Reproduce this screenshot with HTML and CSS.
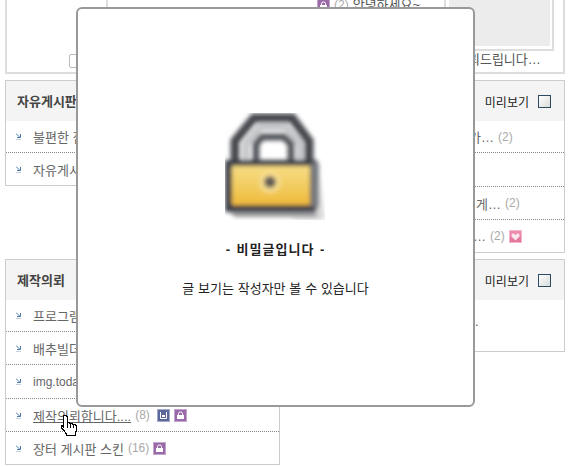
FILE: index.html
```html
<!DOCTYPE html>
<html lang="ko">
<head>
<meta charset="utf-8">
<title>비밀글</title>
<link rel="stylesheet" href="styles.css">
</head>
<body>
<svg class="defs" width="0" height="0" aria-hidden="true">
  <defs>
    <linearGradient id="gold" x1="0" y1="0" x2="0" y2="1">
      <stop offset="0" stop-color="#f7dc84"/><stop offset=".55" stop-color="#f2cb5e"/><stop offset="1" stop-color="#efb93a"/>
    </linearGradient>
    <linearGradient id="pink" x1="0" y1="0" x2="0" y2="1">
      <stop offset="0" stop-color="#ef8fb0"/><stop offset="1" stop-color="#e2709a"/>
    </linearGradient>
    <filter id="blur" x="-10%" y="-10%" width="120%" height="120%"><feGaussianBlur stdDeviation="2.2"/></filter>
    <symbol id="bullet" viewBox="0 0 5 7">
      <path d="M0 .5 3.500 4M4.500 1v3.500H1" fill="none" stroke="#4a78ab"/>
      <path d="M0 6.500h5" stroke="#c6cfdc"/>
    </symbol>
    <symbol id="lock" viewBox="0 0 13 13">
      <rect x=".5" y=".5" width="12" height="12" fill="#9a69a8" stroke="#c3a6cf"/>
      <path d="M4.500 6V4.500q0-1.500 2-1.500t2 1.500V6" fill="none" stroke="#fff"/>
      <rect x="3" y="6" width="7" height="4" fill="#fff"/>
    </symbol>
    <symbol id="save" viewBox="0 0 13 13">
      <rect x=".5" y=".5" width="12" height="12" fill="#5b6799" stroke="#a3abc8"/>
      <path d="M3.500 3v6.500h6V3" fill="none" stroke="#fff"/>
      <rect x="5" y="6" width="3" height="2" fill="#fff"/>
    </symbol>
    <symbol id="heart" viewBox="0 0 13 13">
      <rect x=".5" y=".5" width="12" height="12" fill="url(#pink)" stroke="#f3b7cb"/>
      <path d="M6.500 10.500 2.500 6.500V4.500l1-1h1.500l1.500 1.500 1.500-1.500H9.500l1 1v2z" fill="#fbe6ee"/>
    </symbol>
  </defs>
</svg>

<div class="page">
  <div class="top-row">
    <section class="top-panel top-left"><span class="divider"></span><span class="tag"></span></section>
    <section class="top-panel top-right">
      <div class="top-list"><svg class="mini"><use href="#lock"/></svg><span class="count">(2)</span><span class="top-text">안녕하세요~ .</span></div>
      <div class="top-thumb-col">
        <div class="thumb"><div class="thumb-fill"></div></div>
        <div class="caption">의뢰드립니다…</div>
      </div>
    </section>
  </div>

  <div class="board-row row-a">
    <section class="board">
      <header class="board-head"><h2>자유게시판</h2></header>
      <ul class="rows">
        <li><svg class="bullet"><use href="#bullet"/></svg><a>불편한 점</a></li>
        <li><svg class="bullet"><use href="#bullet"/></svg><a>자유게시판</a></li>
      </ul>
    </section>
    <section class="board">
      <header class="board-head right"><span>미리보기</span><i class="check"></i></header>
      <ul class="rows end">
        <li class="r1"><a>가…</a><span class="count">(2)</span></li>
        <li></li>
        <li class="r3"><a>게…</a><span class="count">(2)</span></li>
        <li class="r4"><a>…</a><span class="count">(2)</span><svg class="mini"><use href="#heart"/></svg></li>
      </ul>
    </section>
  </div>

  <div class="board-row row-b">
    <section class="board">
      <header class="board-head"><h2>제작의뢰</h2></header>
      <ul class="rows">
        <li><svg class="bullet"><use href="#bullet"/></svg><a>프로그램</a></li>
        <li><svg class="bullet"><use href="#bullet"/></svg><a>배추빌더</a></li>
        <li class="latin"><svg class="bullet"><use href="#bullet"/></svg><a>img.today</a></li>
        <li class="hover"><svg class="bullet"><use href="#bullet"/></svg><a>제작의뢰합니다....</a><span class="count">(8)</span><svg class="mini"><use href="#save"/></svg><svg class="mini"><use href="#lock"/></svg>
          <svg class="cursor" width="20" height="24" viewBox="0 0 20 24" shape-rendering="crispEdges"><path d="M6 1.500h2l1 1v6h2l1 1h2l1 1h2l1 1v6l-1 1v3H8v-2l-2-3-3-3v-2h1l1 1V2.500z" fill="#fff" stroke="#000"/><path d="M9.500 9v5M12.500 10v4M15.500 11v3" stroke="#000" fill="none"/></svg>
        </li>
        <li><svg class="bullet"><use href="#bullet"/></svg><a>장터 게시판 스킨</a><span class="count">(16)</span><svg class="mini"><use href="#lock"/></svg></li>
      </ul>
    </section>
    <section class="board">
      <header class="board-head right"><span>미리보기</span><i class="check"></i></header>
      <div class="board-body">.</div>
    </section>
  </div>
</div>

<div class="modal">
  <svg class="lock-big" width="100" height="107" viewBox="0 0 100 107">
    <g filter="url(#blur)">
      <path d="M94 56 100 107H70L60 100z" fill="#dcdcdc"/>
      <path d="M10 50V28L29 5h38l17 23v22" fill="none" stroke="#474a50" stroke-width="9"/>
      <path d="M21 50V31L35 14h26l14 17v19" fill="none" stroke="#c6c7ca" stroke-width="8"/>
      <path d="M31 50V31l6-7h22l7 7v19" fill="none" stroke="#53565b" stroke-width="7"/>
      <rect x="0" y="47" width="92" height="52" fill="#3e4148"/>
      <rect x="86" y="50" width="8" height="44" fill="#777a80"/>
      <rect x="7" y="53" width="78" height="39" fill="url(#gold)"/>
      <circle cx="45" cy="69" r="11" fill="#f6dc8e"/>
      <circle cx="45" cy="69" r="6" fill="#5f5a55"/>
      <path d="M4 99h84l6 5H10z" fill="#9a9a9e"/>
    </g>
  </svg>
  <p class="modal-title">- 비밀글입니다 -</p>
  <p class="modal-text">글 보기는 작성자만 볼 수 있습니다</p>
</div>
</body>
</html>
```
FILE: styles.css
```css
* { box-sizing: border-box; }
html, body { margin: 0; padding: 0; }
body {
  width: 569px;
  height: 467px;
  overflow: hidden;
  background: #fff;
  font-family: "Liberation Sans", "Noto Sans CJK KR", sans-serif;
  position: relative;
}
.defs { position: absolute; }
.page { padding: 0 4px 0 5px; }
.top-row, .board-row { display: grid; grid-template-columns: 275px 275px; gap: 10px; align-items: start; }
.top-row { height: 74px; }
.top-panel { height: 74px; border: 0 solid #ddd; border-bottom-width: 2px; position: relative; }
.top-left { border-left-width: 2px; }
.top-right { border-right-width: 2px; }
.divider { position: absolute; left: 99px; top: 0; width: 2px; height: 8px; background: #ddd; }
.tag {
  position: absolute; left: 62px; top: 54px; width: 10px; height: 14px;
  border: 1px solid #bbb; border-radius: 2px;
}
.top-list {
  display: flex; align-items: center;
  height: 16px; margin-top: -3px; padding-left: 27px;
  font-size: 13px; color: #555; line-height: 14px;
}
.top-list .count { margin-left: 4px; }
.top-text { margin-left: 4px; }
.top-thumb-col { position: absolute; left: 154px; top: 0; width: 110px; }
.thumb { height: 51px; border: 2px solid #ddd; border-top: 0; padding: 0 2px 3px 3px; }
.thumb-fill { height: 100%; background: #ececec; }
.caption { font-size: 13px; color: #555; line-height: 16px; margin-top: 1px; padding-left: 12px; white-space: nowrap; }
.row-a { margin-top: 6px; }
.row-b { margin-top: 6px; }
.board { border: 1px solid #ccc; background: #fff; }
.board-head { height: 40px; background: #f4f4f4; display: flex; align-items: center; padding: 0 10px 2px 11px; }
.board-head h2 { margin: 0; font-size: 13px; font-weight: 700; color: #444; }
.board-head.right { justify-content: flex-end; font-size: 12px; color: #222; gap: 9px; padding: 0 13px 0 0; }
.check {
  display: block; width: 13px; height: 13px; border: 1px solid #2d4a63;
  background: linear-gradient(135deg, #fff, #d8dcd8);
}
.rows { list-style: none; margin: 0; padding: 0; }
.rows li {
  height: 33px;
  border-bottom: 1px dotted #888;
  display: flex; align-items: center;
  padding-left: 10px;
  font-size: 13px;
  color: #666;
  position: relative;
}
.rows li:first-child { height: 32px; }
.rows li:last-child { height: 32px; border-bottom: 0; }
.row-a .rows.end li:nth-child(2) { height: 34px; }
.row-b .rows li:nth-child(3) { height: 34px; }
.rows li.latin { font-size: 12px; }
.bullet { width: 5px; height: 7px; margin-right: 12px; flex: none; }
.rows.end .r1 { padding-left: 178px; }
.rows.end .r3 { padding-left: 185px; }
.rows.end .r4 { padding-left: 182px; }
.hover a { text-decoration: underline; }
.count { color: #aaa; font-size: 12px; margin-left: 4px; }
.mini { width: 13px; height: 13px; flex: none; margin-left: 4px; }
.hover .count + .mini { margin-left: 7px; }
.top-list .mini { margin-left: 0; }
.board-body { height: 51px; font-size: 13px; color: #555; padding: 14px 0 0 184px; }
.cursor { position: absolute; left: 52px; top: 15px; }
.modal {
  position: absolute;
  left: 76px; top: 7px;
  width: 399px; height: 400px;
  background: #fff;
  border: 2px solid #999;
  border-radius: 6px;
  display: flex; flex-direction: column; align-items: center;
  padding-top: 104px;
  color: #222;
}
.lock-big { display: block; margin-left: -1px; }
.modal-title { margin: 21px 0 0; font-size: 13px; font-weight: 700; line-height: 18px; letter-spacing: 1px; word-spacing: 1px; }
.modal-text { margin: 21px 0 0; font-size: 13px; line-height: 18px; word-spacing: .2px; }
```
